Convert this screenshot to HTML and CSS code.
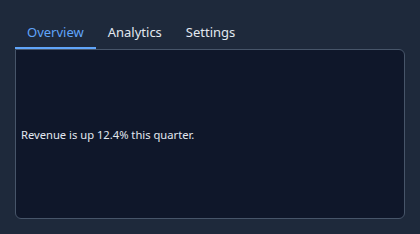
FILE: index.html
```html
<!DOCTYPE html>
<html>
<head>
<meta charset="utf-8">
<link rel="stylesheet" href="styles.css">
</head>
<body>
<div class="tabs">
  <div class="tablist">
    <div class="tab active">Overview</div>
    <div class="tab">Analytics</div>
    <div class="tab">Settings</div>
  </div>
  <div class="panel">
    <p class="text">Revenue is up 12.4% this quarter.</p>
  </div>
</div>
</body>
</html>
```

FILE: styles.css
```css
html, body {
  margin: 0;
  padding: 0;
  background: #1e293b;
  font-family: "Noto Sans", sans-serif;
}
.tabs {
  padding: 15px;
  display: flex;
  flex-direction: column;
  height: 234px;
  box-sizing: border-box;
}
.tablist {
  display: flex;
}
.tab {
  padding: 8px 12px 6px;
  font-size: 13px;
  line-height: 18px;
  color: #e2e8f0;
  border-bottom: 2px solid transparent;
}
.tab.active {
  color: #60a5fa;
  border-bottom-color: #60a5fa;
}
.panel {
  flex: 1;
  background: #0f172a;
  border: 1px solid #475569;
  border-radius: 0 6px 6px 6px;
  display: flex;
  align-items: center;
  padding: 0 5px;
}
.text {
  margin: 0;
  font-size: 11.2px;
  color: #e2e8f0;
}
```
